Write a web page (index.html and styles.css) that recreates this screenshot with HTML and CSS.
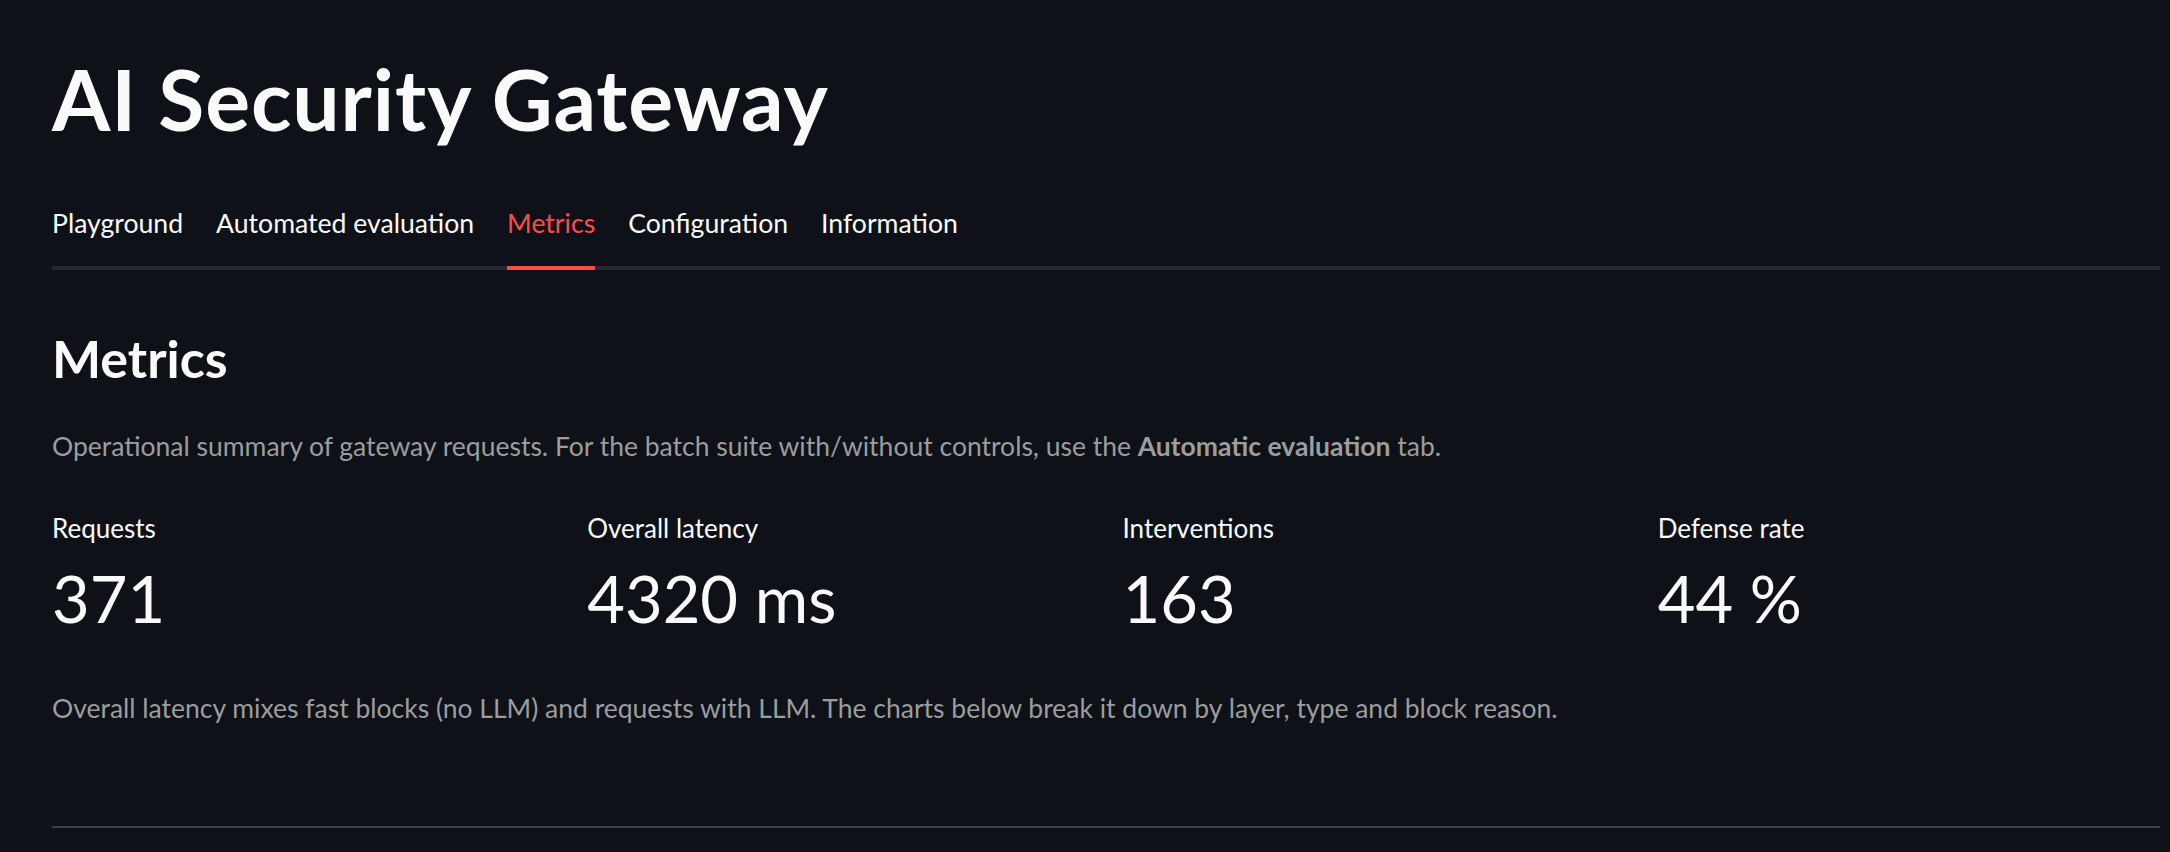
FILE: index.html
```html
<!DOCTYPE html>
<html lang="en">
<head>
  <meta charset="UTF-8" />
  <meta name="viewport" content="width=device-width, initial-scale=1.0"/>
  <title>AI Security Gateway</title>
  <link rel="stylesheet" href="styles.css">
</head>
<body>
<div class="app">
  <h1 class="app-title">AI Security Gateway</h1>

  <div class="tabs">
    <span class="tab">Playground</span>
    <span class="tab">Automated evaluation</span>
    <span class="tab active">Metrics</span>
    <span class="tab">Configuration</span>
    <span class="tab">Information</span>
  </div>

  <h3 class="section-title">Metrics</h3>
  <p class="caption intro">Operational summary of gateway requests. For the batch suite with/without controls, use the <strong>Automatic evaluation</strong> tab.</p>

  <div class="metrics">
    <div class="metric">
      <div class="metric-label">Requests</div>
      <div class="metric-value">371</div>
    </div>
    <div class="metric">
      <div class="metric-label">Overall latency</div>
      <div class="metric-value">4320 ms</div>
    </div>
    <div class="metric">
      <div class="metric-label">Interventions</div>
      <div class="metric-value">163</div>
    </div>
    <div class="metric">
      <div class="metric-label">Defense rate</div>
      <div class="metric-value">44 %</div>
    </div>
  </div>

  <p class="caption note">Overall latency mixes fast blocks (no LLM) and requests with LLM. The charts below break it down by layer, type and block reason.</p>

  <hr class="divider">
</div>
</body>
</html>
```

FILE: styles.css
```css
body {
  margin: 0;
  background-color: #0e1117;
  color: #fafafa;
  font-family: Lato, "Noto Sans", sans-serif;
}
.app {
  padding: 49px 10px 0 52px;
}
.app-title {
  margin: 0;
  font-size: 84px;
  font-weight: 700;
  line-height: 1.2;
  letter-spacing: 0.9px;
}

/* Tabs */
.tabs {
  display: flex;
  gap: 33px;
  margin-top: 47px;
  box-shadow: inset 0 -4px 0 #26272f;
}
.tab {
  font-size: 26.6px;
  line-height: 52px;
  padding-bottom: 21.5px;
}
.tab.active {
  color: #ff4b4b;
  padding-bottom: 17.5px;
  border-bottom: 4px solid #ff4b4b;
}

.section-title {
  margin: 57px 0 0;
  font-size: 52px;
  font-weight: 700;
  line-height: 1.2;
}
.caption {
  margin: 0;
  font-size: 26.5px;
  line-height: 1.5;
  color: #9c9d9f;
}
.caption strong { font-weight: 700; }
.intro { margin-top: 37px; }

/* Metric row */
.metrics {
  display: grid;
  grid-template-columns: repeat(4, 1fr);
  gap: 33px;
  margin-top: 43px;
}
.metric-label {
  font-size: 26px;
  line-height: 1.5;
}
.metric-value {
  margin-top: 11px;
  font-size: 65px;
  line-height: 1.2;
}
.note { margin-top: 52px; }

.divider {
  margin: 97px 0 0;
  border: none;
  height: 2px;
  background: #3d3f46;
}
```
